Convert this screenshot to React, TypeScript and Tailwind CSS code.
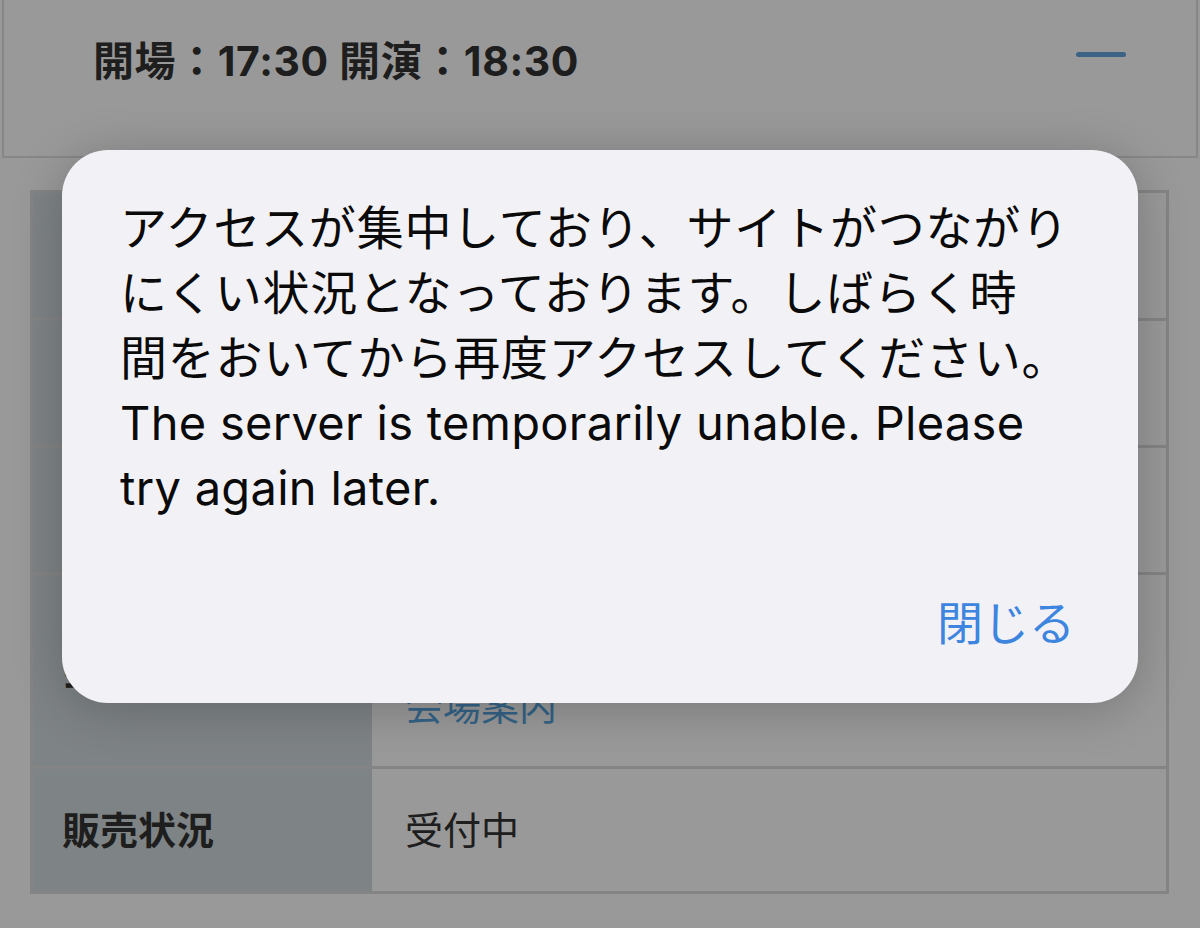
import { useState } from 'react'

const jp = "font-['Inter','Noto_Sans_CJK_JP',sans-serif]"

function InfoRow({
  label,
  height,
  children,
  last,
}: {
  label?: string
  height: string
  children?: React.ReactNode
  last?: boolean
}) {
  return (
    <div className={`flex ${height} ${last ? '' : 'border-b-[3px] border-[#dcdcdc]'}`}>
      <div className="w-[339px] shrink-0 bg-[#d2dbde] flex items-center pl-[29px]">
        {label && <span className="text-[38px] font-bold text-[#333] leading-none">{label}</span>}
      </div>
      <div className="flex-1 flex flex-col justify-center pl-[33px] text-[38px] text-[#333]">{children}</div>
    </div>
  )
}

export default function App() {
  const [open, setOpen] = useState(true)

  return (
    <div className={`relative w-[1200px] h-[928px] overflow-hidden bg-white ${jp}`}>
      {/* schedule header */}
      <div className="mx-[2px] h-[158px] border-x-2 border-b-2 border-[#e2e2e2] flex items-start justify-between pt-[38px] pl-[89px] pr-[70px]">
        <h2 className="text-[41px] font-bold leading-[46px] text-[#333] tracking-[0.6px]">開場：17:30 開演：18:30</h2>
        <div className="mt-[14px] w-[50px] h-[5px] rounded-sm bg-[#64a5df]" />
      </div>

      {/* event detail table */}
      <div className="mt-[32px] ml-[30px] w-[1139px] border-[3px] border-[#dcdcdc]">
        <InfoRow height="h-[128px]" />
        <InfoRow height="h-[127px]" />
        <InfoRow height="h-[127px]" />
        <InfoRow label="会場" height="h-[194px]">
          <div className="flex flex-col justify-end h-full pb-[32px]">
            <a className="text-[38px] leading-[56px] text-[#58a6e2]">会場案内</a>
          </div>
        </InfoRow>
        <InfoRow label="販売状況" height="h-[122px]" last>
          <span className="leading-none">受付中</span>
        </InfoRow>
      </div>

      {open && (
        <div className="absolute inset-0 bg-black/40 flex justify-center items-start pt-[150px]">
          <div className="w-[1076px] rounded-[46px] bg-[#f2f2f6] shadow-[0_6px_50px_rgba(0,0,0,0.22)] pt-[45px] pl-[58px] pr-[63px] pb-[50px]">
            <p className="text-[47px] leading-[65px] text-[#0a0a0a] whitespace-nowrap">
              <span className="tracking-[0.8px]">
                アクセスが集中しており、サイトがつながり
                <br />
                にくい状況となっております。しばらく時
                <br />
                間をおいてから再度アクセスしてください。
              </span>
              <br />
              <span className="tracking-[0.3px]">
                The server is temporarily unable. Please
                <br />
                try again later.
              </span>
            </p>
            <div className="flex justify-end mt-[73px]">
              <button onClick={() => setOpen(false)} className="text-[46px] leading-[60px] text-[#3d85de]">
                閉じる
              </button>
            </div>
          </div>
        </div>
      )}
    </div>
  )
}
